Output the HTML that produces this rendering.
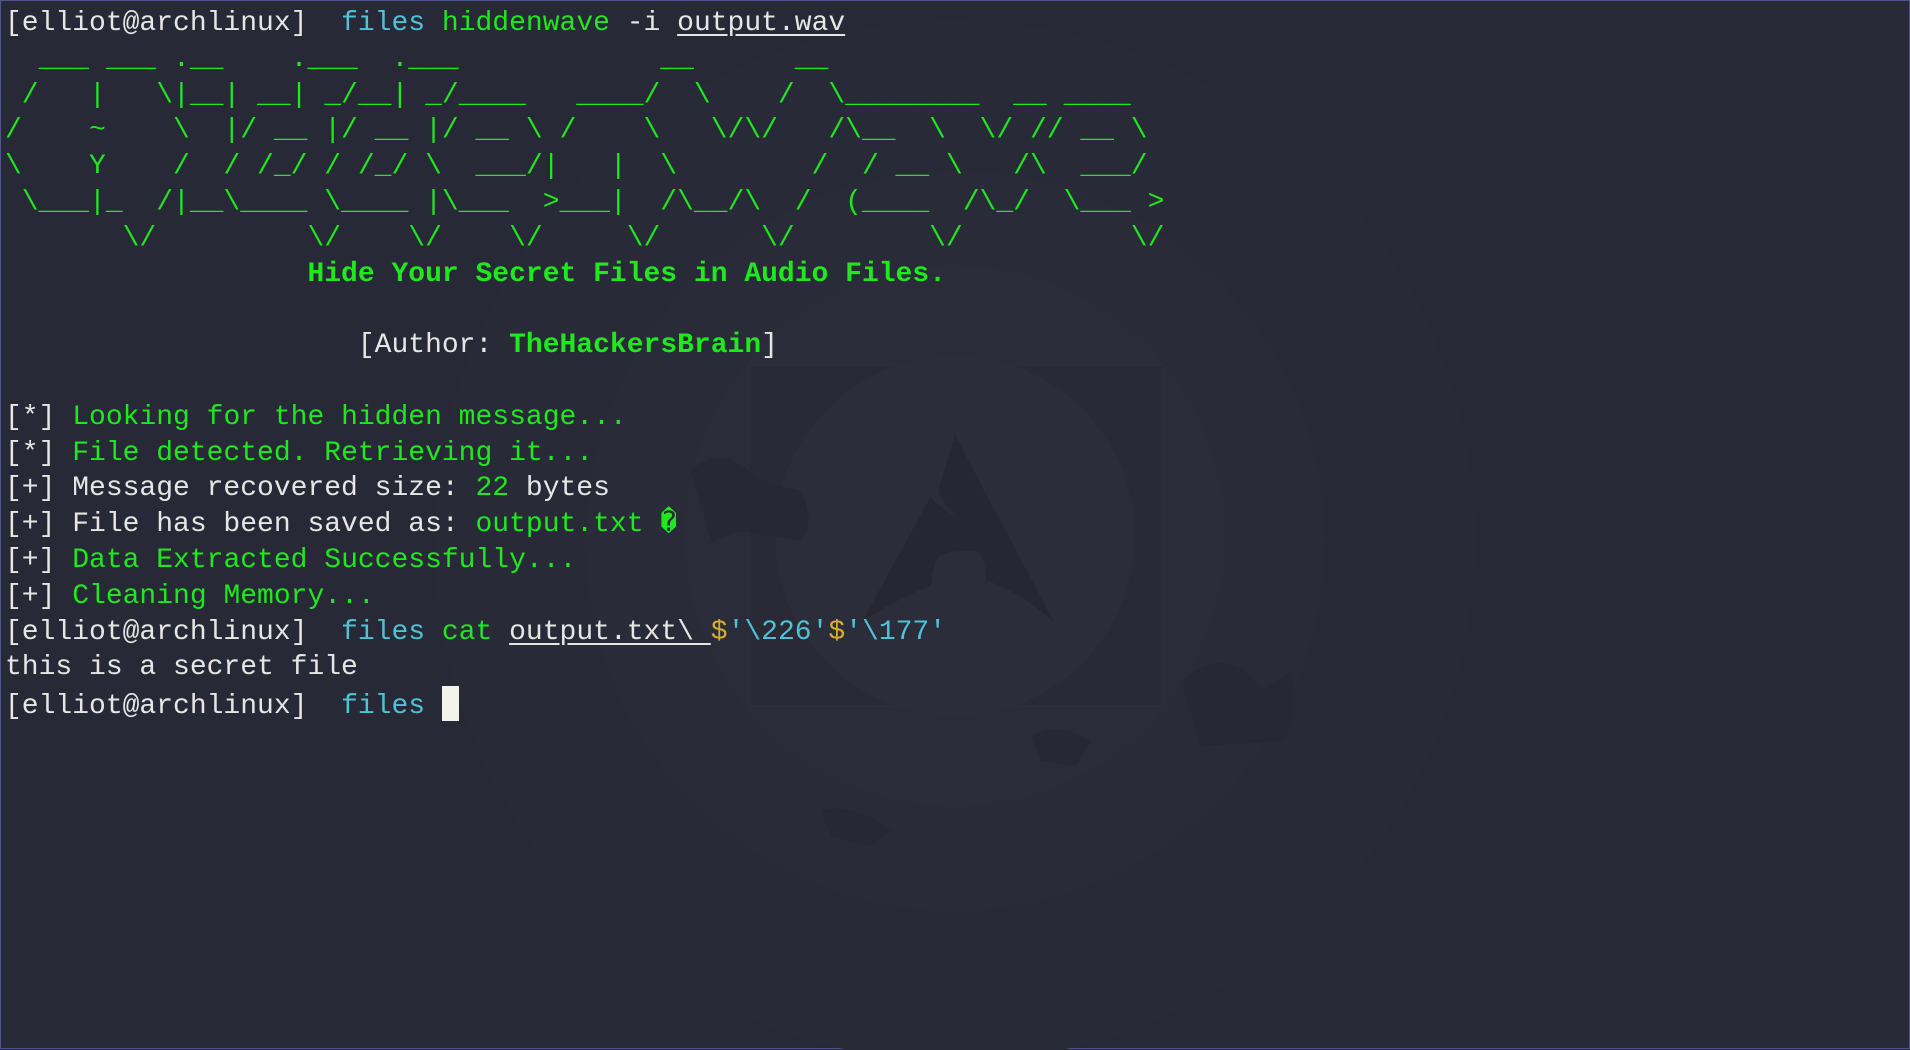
<!DOCTYPE html>
<html><head><meta charset="utf-8"><style>
html,body{margin:0;padding:0;}
body{width:1910px;height:1049px;overflow:hidden;background:#282936;position:relative;box-sizing:border-box;border:1px solid #4c5790;}
#bg{position:absolute;left:0;top:0;}
pre{position:absolute;left:4px;top:5px;margin:0;font-family:"Liberation Mono","DejaVu Sans Mono",monospace;font-size:28px;line-height:35.8px;color:#e6e6e6;white-space:pre;}
.g{color:#1fe81f}.c{color:#4ec3d6}.y{color:#d9ad2a}.b{font-weight:bold}.u{text-decoration:underline;text-underline-offset:4px}
.cur{display:inline-block;width:17px;height:35px;background:#f3f3ea;vertical-align:-8px;}
</style></head><body>
<svg id="bg" width="1910" height="1049" viewBox="0 0 1910 1049">
<circle cx="954" cy="540" r="520" fill="#292a37"/>
<circle cx="954" cy="540" r="370" fill="#2a2b38"/>
<circle cx="954" cy="535" r="270" fill="#2b2c39"/>
<rect x="748" y="364" width="415" height="341" fill="#292a36" stroke="#2e2f3b"/>
<ellipse cx="954" cy="535" rx="180" ry="180" fill="#2c2d3a"/>
<path d="M954 434 L1053 621 Q1010 585 985 580 Q985 555 975 550 Q955 548 938 555 Q930 570 930 585 Q900 595 861 621 L930 495 Q935 505 955 515 Q940 500 937 490 Z" fill="#262733"/>
<path d="M690 470 Q720 440 760 480 L800 490 Q815 520 800 540 L740 530 L710 540 Z" fill="#272833"/>
<path d="M1180 680 Q1230 640 1260 690 L1290 670 Q1300 720 1280 740 L1200 745 Z" fill="#272833"/>
<path d="M1030 735 Q1060 720 1090 740 L1075 765 L1040 760 Z" fill="#272833"/>
<path d="M820 810 Q850 800 890 830 L870 845 L830 835 Z" fill="#272833"/>
</svg>
<pre><span>[elliot@archlinux]  </span><span class="c">files</span> <span class="g">hiddenwave</span> -i <span class="u">output.wav</span>
<span class="g">  ___ ___ .__    .___  .___            __      __
 /   |   \|__| __| _/__| _/____   ____/  \    /  \________  __ ____
/    ~    \  |/ __ |/ __ |/ __ \ /    \   \/\/   /\__  \  \/ // __ \
\    Y    /  / /_/ / /_/ \  ___/|   |  \        /  / __ \   /\  ___/
 \___|_  /|__\____ \____ |\___  >___|  /\__/\  /  (____  /\_/  \___ >
       \/         \/    \/    \/     \/      \/        \/          \/</span>
<span class="g b">                  Hide Your Secret Files in Audio Files.</span>

                     [Author: <span class="g b">TheHackersBrain</span>]

[*] <span class="g">Looking for the hidden message...</span>
[*] <span class="g">File detected. Retrieving it...</span>
[+] Message recovered size: <span class="g">22</span> bytes
[+] File has been saved as: <span class="g">output.txt &#xFFFD;</span>
[+] <span class="g">Data Extracted Successfully...</span>
[+] <span class="g">Cleaning Memory...</span>
[elliot@archlinux]  <span class="c">files</span> <span class="g">cat</span> <span class="u">output.txt\ </span><span class="y">$</span><span class="c">'\226'</span><span class="y">$</span><span class="c">'\177'</span>
this is a secret file
[elliot@archlinux]  <span class="c">files</span> <span class="cur"></span></pre>
</body></html>
